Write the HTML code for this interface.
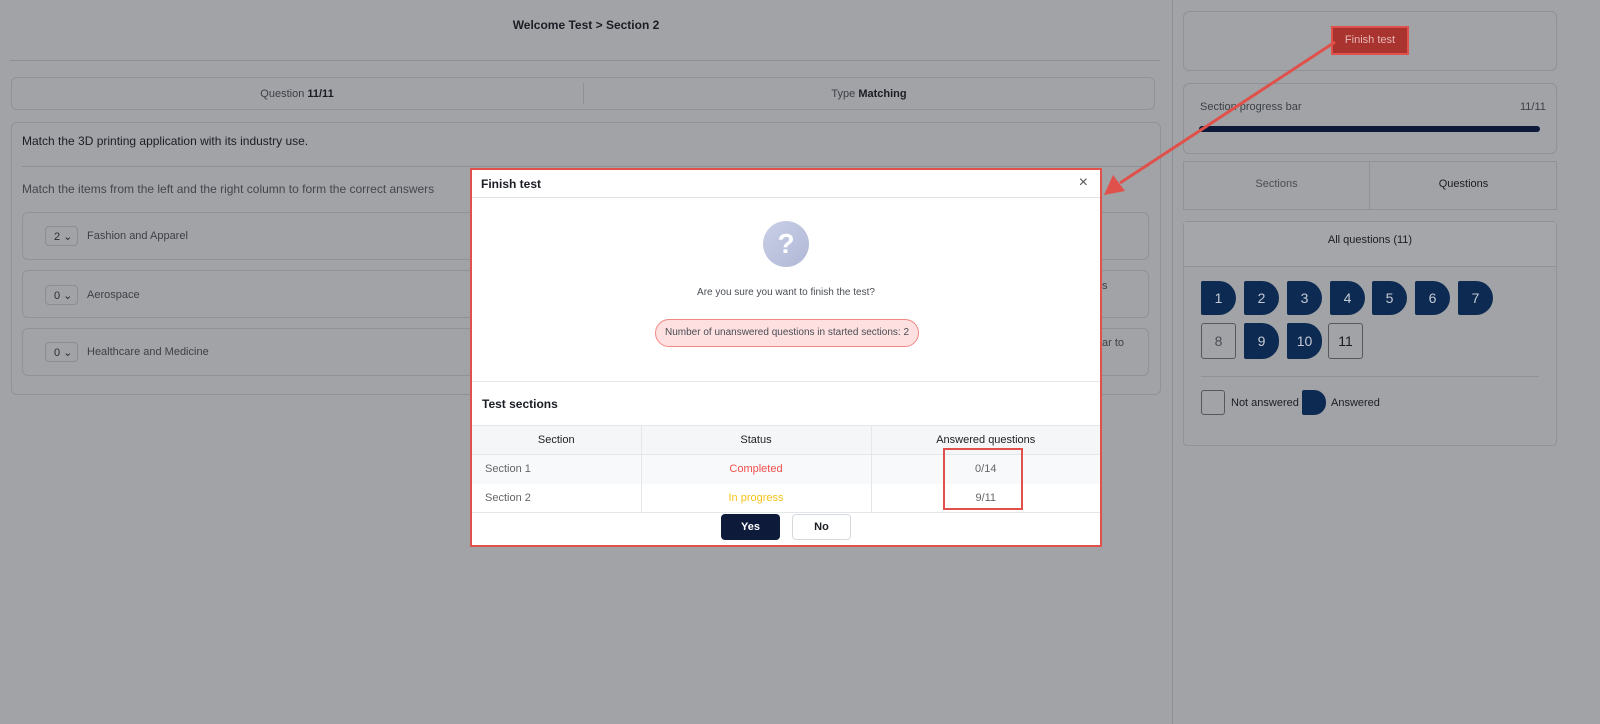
<!DOCTYPE html>
<html><head><meta charset="utf-8"><style>
*{box-sizing:border-box;margin:0;padding:0}
body{width:1600px;height:724px;background:#a1a3a7;font-family:"Liberation Sans",sans-serif;position:relative;overflow:hidden;color:#1a1d24}
.a{position:absolute}
.card{position:absolute;border:1px solid #8f9296;border-radius:6px}
.t{font-size:11px;color:#3d4047}
.q{position:absolute;width:35px;height:34px;background:#0d2a52;color:#c5cad3;font-size:14px;display:flex;align-items:center;justify-content:center;border-radius:2px 17px 17px 2px}
.qe{background:none;border:1px solid #55585e;border-radius:3px;color:#4a4d53}
.sel{position:absolute;left:45px;width:33px;height:20px;border:1px solid #8a8d92;border-radius:4px;font-size:11px;padding:3px 0 0 8px;color:#2a2d33}
.row{position:absolute;left:22px;width:1127px;height:48px;border:1px solid #8f9296;border-radius:6px}
td,th{font-size:11px;text-align:center;border-right:1px solid #e3e6ea;height:29px}
</style></head><body>
<div class="a" style="left:0;top:18px;width:1172px;text-align:center;font-size:12px;font-weight:bold">Welcome Test &gt; Section 2</div>
<div class="a" style="left:10px;top:60px;width:1150px;height:1px;background:#8d9094"></div>
<div class="a" style="left:1172px;top:0;width:1px;height:724px;background:#8d9094"></div>
<div class="card" style="left:11px;top:77px;width:1144px;height:33px"></div>
<div class="a t" style="left:11px;top:88px;width:572px;text-align:center">Question <b style="color:#1a1d24">11/11</b></div>
<div class="a" style="left:583px;top:83px;width:1px;height:21px;background:#8d9094"></div>
<div class="a t" style="left:583px;top:88px;width:572px;text-align:center">Type <b style="color:#1a1d24">Matching</b></div>
<div class="card" style="left:11px;top:122px;width:1150px;height:273px"></div>
<div class="a" style="left:22px;top:134px;font-size:12px">Match the 3D printing application with its industry use.</div>
<div class="a" style="left:22px;top:166px;width:1127px;height:1px;background:#8d9094"></div>
<div class="a" style="left:22px;top:182px;font-size:12px;color:#43464c">Match the items from the left and the right column to form the correct answers</div>
<div class="row" style="top:212px"></div><div class="sel" style="top:226px">2 ⌄</div><div class="a t" style="left:87px;top:230px">Fashion and Apparel</div>
<div class="row" style="top:270px"></div><div class="sel" style="top:285px">0 ⌄</div><div class="a t" style="left:87px;top:289px">Aerospace</div>
<div class="row" style="top:328px"></div><div class="sel" style="top:342px">0 ⌄</div><div class="a t" style="left:87px;top:346px">Healthcare and Medicine</div>
<div class="a t" style="left:1102px;top:280px">s</div><div class="a t" style="left:1102px;top:337px">ar to</div>

<div class="card" style="left:1183px;top:11px;width:374px;height:60px"></div>
<div class="a" style="left:1331px;top:26px;width:78px;height:29px;border:2px solid #e0514b;background:#a8332f;color:#e7b9b6;font-size:11px;text-align:center;line-height:25px">Finish test</div>
<div class="card" style="left:1183px;top:83px;width:374px;height:71px"></div>
<div class="a t" style="left:1200px;top:101px">Section progress bar</div>
<div class="a t" style="left:1520px;top:101px">11/11</div>
<div class="a" style="left:1199px;top:126px;width:341px;height:6px;background:#0e1a3a;border-radius:3px"></div>
<div class="card" style="left:1183px;top:161px;width:374px;height:49px;border-radius:0"></div>
<div class="a" style="left:1369px;top:161px;width:1px;height:49px;background:#8f9296"></div>
<div class="a t" style="left:1183px;top:178px;width:187px;text-align:center;color:#4b4e54">Sections</div>
<div class="a t" style="left:1370px;top:178px;width:187px;text-align:center;color:#1a1d24">Questions</div>
<div class="card" style="left:1183px;top:221px;width:374px;height:225px;border-radius:4px"></div>
<div class="a" style="left:1184px;top:222px;width:372px;height:45px;border-bottom:1px solid #8f9296;background:#a4a6aa"></div>
<div class="a t" style="left:1183px;top:234px;width:374px;text-align:center;color:#1a1d24">All questions (11)</div>
<div class="q" style="left:1201px;top:281px">1</div><div class="q" style="left:1244px;top:281px">2</div><div class="q" style="left:1287px;top:281px">3</div><div class="q" style="left:1330px;top:281px">4</div><div class="q" style="left:1372px;top:281px">5</div><div class="q" style="left:1415px;top:281px">6</div><div class="q" style="left:1458px;top:281px">7</div>
<div class="q qe" style="left:1201px;top:323px;height:36px">8</div><div class="q" style="left:1244px;top:323px;height:36px">9</div><div class="q" style="left:1287px;top:323px;height:36px">10</div><div class="q qe" style="left:1328px;top:323px;height:36px;color:#1a1d24">11</div>
<div class="a" style="left:1201px;top:376px;width:338px;height:1px;background:#8f9296"></div>
<div class="a" style="left:1201px;top:390px;width:24px;height:25px;border:1px solid #55585e;border-radius:3px"></div>
<div class="a t" style="left:1231px;top:397px;color:#1a1d24">Not answered</div>
<div class="a" style="left:1302px;top:390px;width:24px;height:25px;background:#0d2a52;border-radius:2px 12px 12px 2px"></div>
<div class="a t" style="left:1331px;top:397px;color:#1a1d24">Answered</div>

<svg class="a" style="left:0;top:0" width="1600" height="724"><line x1="1335" y1="42" x2="1120" y2="183" stroke="#e0514b" stroke-width="3"/><polygon points="1104,195 1113,175 1125,191" fill="#e0514b"/></svg>

<div class="a" style="left:470px;top:168px;width:632px;height:379px;border:2px solid #e0514b;background:#fff">
 <div style="height:28px;border-bottom:1px solid #dfe2e7;font-size:12px;font-weight:bold;padding:7px 9px">Finish test<span style="position:absolute;right:12px;top:4px;font-weight:normal;font-size:16px;color:#555">×</span></div>
 <div class="a" style="left:291px;top:51px;width:46px;height:46px;border-radius:50%;background:linear-gradient(135deg,#c9cfe6,#b0b8d6);color:#fff;font-size:28px;font-weight:bold;text-align:center;line-height:46px">?</div>
 <div class="a" style="left:0;top:117px;width:628px;text-align:center;font-size:10px;color:#4a4d55">Are you sure you want to finish the test?</div>
 <div class="a" style="left:183px;top:149px;width:264px;height:28px;border:1px solid #f08a85;background:#fde0df;border-radius:14px;font-size:10px;color:#4a4d55;text-align:center;line-height:26px">Number of unanswered questions in started sections: 2</div>
 <div class="a" style="left:0;top:211px;width:628px;height:1px;background:#e3e6ea"></div>
 <div class="a" style="left:10px;top:227px;font-size:12px;font-weight:bold">Test sections</div>
 <table class="a" style="left:0;top:255px;width:628px;border-collapse:collapse;border-top:1px solid #e3e6ea;border-bottom:1px solid #e3e6ea">
  <tr style="background:#f5f6f8;border-bottom:1px solid #e3e6ea"><th style="width:169px;font-weight:normal;color:#222">Section</th><th style="width:230px;font-weight:normal;color:#222">Status</th><th style="border:0;font-weight:normal;color:#222">Answered questions</th></tr>
  <tr style="background:#f8f9fb"><td style="text-align:left;padding-left:13px;color:#666">Section 1</td><td style="color:#f2504a">Completed</td><td style="border:0;color:#666">0/14</td></tr>
  <tr><td style="text-align:left;padding-left:13px;color:#666">Section 2</td><td style="color:#f5c21b">In progress</td><td style="border:0;color:#666">9/11</td></tr>
 </table>
 <div class="a" style="left:471px;top:278px;width:80px;height:62px;border:2px solid #e0514b"></div>
 <div class="a" style="left:249px;top:344px;width:59px;height:26px;background:#0e1a3a;border-radius:4px;color:#fff;font-size:11px;font-weight:bold;text-align:center;line-height:26px">Yes</div>
 <div class="a" style="left:320px;top:344px;width:59px;height:26px;border:1px solid #d6d9de;border-radius:4px;font-size:11px;font-weight:bold;text-align:center;line-height:24px">No</div>
</div>
</body></html>
